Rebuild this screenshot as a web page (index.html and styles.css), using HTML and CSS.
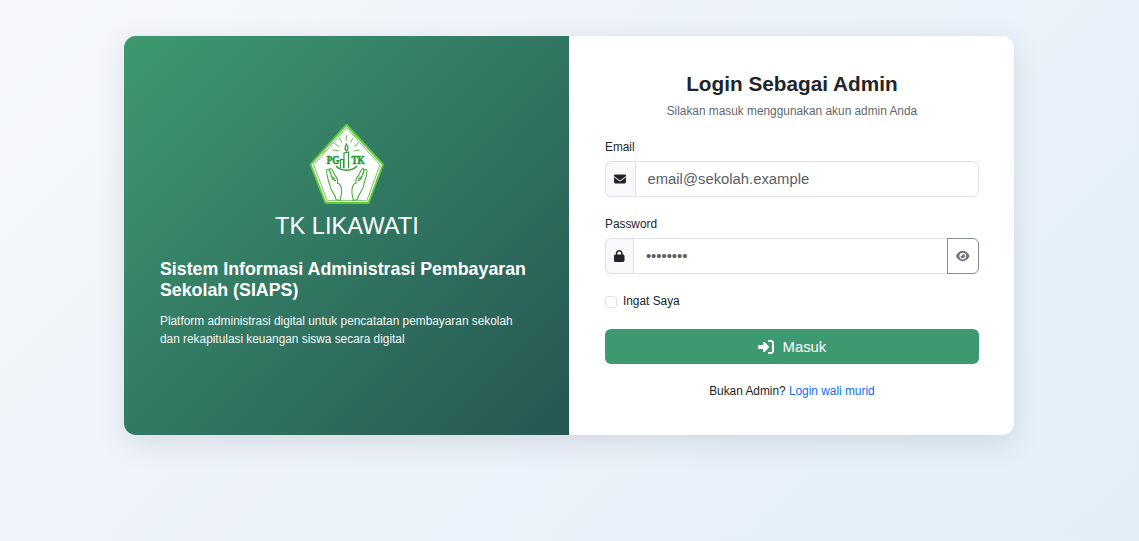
FILE: index.html
```html
<!DOCTYPE html>
<html lang="id">
<head>
<meta charset="utf-8">
<title>Login Admin</title>
<link rel="stylesheet" href="styles.css">
</head>
<body>
<main class="card">
  <section class="brand">
    <div class="brand-head">
      <svg class="logo" viewBox="0 0 76 82" role="img" aria-label="PG TK">
        <path d="M37.500 1.700 74 41.500 59.500 80H16.500L1.500 41.500Z" fill="#fff" stroke="#62c83c" stroke-width="2" stroke-linejoin="round"/>
        <path d="M37.500 4.700 71 41.900 57.800 77.700H18.200L4.700 41.900Z" fill="none" stroke="#62bd43" stroke-width=".9"/>
        <path d="M37.300 12v5M30.500 15l2.300 4.300M44 15l-2.300 4.300M25 20l4.500 3.500M49.500 20 45 23.500M24 27l5.500.8M50.500 27l-5.500.8" fill="none" stroke="#68b957" stroke-width="1" stroke-linecap="round"/>
        <g fill="#fff" stroke="#2f9a36" stroke-width="1.200">
          <path d="M31.500 45v-8.500H34.500V45M35 45.500V30l4.500-1v16.500"/>
          <path d="M37.300 28c-3-2.500-.5-4 0-7 2 3 2.800 4.500 0 7Z"/>
          <path d="M27 43c5 5.500 16 5.500 21 0" fill="none" stroke-width="1.500"/>
        </g>
        <text class="logo-text" x="17.800" y="40.700" textLength="12.600" lengthAdjust="spacingAndGlyphs">PG</text>
        <text class="logo-text" x="42.500" y="40.700" textLength="13" lengthAdjust="spacingAndGlyphs">TK</text>
        <g fill="none" stroke="#4dae42" stroke-width="1.100" stroke-linejoin="round" stroke-linecap="round">
          <path d="M27 76.500C26.500 70 21 68 20.500 61 19 56 16.500 49 18 46.500c1.500-1 2.500 1 3.500 4-1.500-4.500-.5-6.500 1.500-4l3 6c2 2 3 5 2.500 8 1.500-1 3.500 2 4 6 .8 4-.5 7-1.500 11Z"/>
          <path d="M48.500 76.500c.5-6.500 6-8.500 6.500-15.500 1.500-5 4-12 2.500-14.500-1.500-1-2.500 1-3.500 4 1.500-4.500.5-6.500-1.500-4l-3 6c-2 2-3 5-2.500 8-1.500-1-3.500 2-4 6-.8 4 .5 7 1.500 11Z"/>
          <path d="m21.500 50 2 6 3 2M22 53l4 3M54 50l-2 6-3 2M53.500 53l-4 3"/>
        </g>
      </svg>
      <div class="school">TK LIKAWATI</div>
    </div>
    <h1 class="system">Sistem Informasi Administrasi Pembayaran Sekolah (SIAPS)</h1>
    <p class="about">Platform administrasi digital untuk pencatatan pembayaran sekolah dan rekapitulasi keuangan siswa secara digital</p>
  </section>
  <form class="login">
    <h2 class="title">Login Sebagai Admin</h2>
    <p class="subtitle">Silakan masuk menggunakan akun admin Anda</p>
    <label class="label" for="email">Email</label>
    <div class="group">
      <span class="addon addon-mail"><svg width="12" height="12" viewBox="0 0 512 512" fill="currentColor"><path d="M48 64C21.500 64 0 85.500 0 112c0 15.100 7.100 29.300 19.200 38.400l217.600 163.200c11.400 8.500 27 8.500 38.400 0l217.600-163.200c12.100-9.100 19.200-23.300 19.200-38.400 0-26.500-21.500-48-48-48H48zM0 176v208c0 35.300 28.700 64 64 64h384c35.300 0 64-28.700 64-64V176L294.400 339.200c-22.800 17.100-54 17.100-76.800 0L0 176z"/></svg></span>
      <input class="input input-end" id="email" type="email" placeholder="email@sekolah.example">
    </div>
    <label class="label" for="password">Password</label>
    <div class="group">
      <span class="addon addon-lock"><svg width="10.500" height="12" viewBox="0 0 448 512" fill="currentColor"><path d="M144 144v48h160v-48c0-44.200-35.800-80-80-80s-80 35.800-80 80zm-64 48v-48C80 64.500 144.500 0 224 0s144 64.500 144 144v48h16c35.300 0 64 28.700 64 64v192c0 35.300-28.700 64-64 64H64c-35.300 0-64-28.700-64-64V256c0-35.300 28.700-64 64-64h16z"/></svg></span>
      <input class="input" id="password" type="text" placeholder="••••••••">
      <button class="reveal" type="button" aria-label="Lihat"><svg width="13.500" height="12" viewBox="0 0 576 512" fill="currentColor"><path d="M288 32c-80.800 0-145.500 36.800-192.600 80.600C48.600 156 17.300 208 2.500 243.700c-3.300 7.900-3.300 16.700 0 24.600C17.300 304 48.600 356 95.400 399.400 142.500 443.200 207.200 480 288 480s145.500-36.800 192.600-80.600c46.800-43.500 78.100-95.400 93-131.100 3.300-7.900 3.300-16.700 0-24.600-14.900-35.700-46.200-87.700-93-131.100C433.500 68.800 368.800 32 288 32zM144 256a144 144 0 1 1 288 0 144 144 0 1 1-288 0zm144-64c0 35.300-28.700 64-64 64-7.100 0-13.900-1.200-20.300-3.300-5.500-1.800-11.900 1.600-11.700 7.400.3 6.900 1.300 13.800 3.200 20.700 13.700 51.200 66.400 81.600 117.600 67.900s81.600-66.400 67.900-117.600c-11.100-41.500-47.800-69.400-88.600-71.100-5.800-.2-9.200 6.100-7.400 11.700 2.100 6.400 3.300 13.200 3.300 20.300z"/></svg></button>
    </div>
    <label class="remember"><input class="check" type="checkbox">Ingat Saya</label>
    <button class="submit" type="button"><svg width="16" height="16" viewBox="0 0 512 512" fill="currentColor"><path d="M217.900 105.900 340.700 228.700c7.200 7.200 11.300 17.100 11.300 27.300s-4.100 20.100-11.300 27.300L217.900 406.100c-6.400 6.400-15 9.900-24 9.900-18.700 0-33.900-15.200-33.900-33.900V320H32c-17.700 0-32-14.300-32-32v-64c0-17.700 14.300-32 32-32h128v-62.100c0-18.700 15.200-33.900 33.900-33.900 9 0 17.600 3.600 24 9.900zM352 416h64c17.700 0 32-14.300 32-32V128c0-17.700-14.300-32-32-32h-64c-17.700 0-32-14.300-32-32s14.300-32 32-32h64c53 0 96 43 96 96v256c0 53-43 96-96 96h-64c-17.700 0-32-14.300-32-32s14.300-32 32-32z"/></svg>Masuk</button>
    <p class="switch">Bukan Admin? <a class="link" href="#">Login wali murid</a></p>
  </form>
</main>
</body>
</html>
```
FILE: styles.css
```css
* { box-sizing: border-box; }
body {
  margin: 0;
  min-height: 541px;
  padding-top: 35.6px;
  background: linear-gradient(135deg, #f6f8fa 0%, #eef3fb 40%, #e2eff8 100%);
  color: #212529;
  font: 11.87px/17.8px "Liberation Sans", Arial, sans-serif;
}
h1, h2, p { margin: 0; }
.card {
  display: grid;
  grid-template-columns: 1fr 1fr;
  width: 890px;
  height: 399.6px;
  margin: 0 0 0 124.400px;
  overflow: hidden;
  border-radius: 11.9px;
  background: #fff;
  box-shadow: 0 7.4px 29.7px rgba(0, 0, 0, .1);
}
.brand {
  display: flex;
  flex-direction: column;
  justify-content: center;
  padding: 1.4px 35.6px 0;
  background: linear-gradient(135deg, #3d9970 0%, #265653 100%);
  color: #fff;
}
.brand-head {
  display: flex;
  flex-direction: column;
  align-items: center;
  margin-bottom: 13.6px;
}
.logo { display: block; width: 76px; height: 82px; margin-bottom: 4.2px; }
.logo-text { font: bold 11.500px "Liberation Serif", serif; fill: #239b34; stroke: #239b34; stroke-width: .6px; }
.school { font-size: 23.7px; line-height: 35.6px; }
.system { margin-bottom: 11.9px; font-size: 17.8px; line-height: 21.4px; }
.about { opacity: .95; }
.login { display: flex; flex-direction: column; padding: 36.5px 35.6px 0; }
.title { margin-bottom: 5.9px; font-size: 20.77px; line-height: 24.9px; text-align: center; }
.subtitle { margin-bottom: 18.2px; color: #63686c; text-align: center; }
.label { margin-bottom: 4.6px; }
.group { display: flex; height: 35.6px; margin-bottom: 19.100px; }
.addon {
  display: flex;
  align-items: center;
  justify-content: center;
  border: 1px solid #dee2e6;
  border-right: 0;
  border-radius: 6px 0 0 6px;
  background: #f8f9fa;
}
.addon-mail { width: 30px; }
.addon-lock { width: 28.4px; }
.input {
  flex: 1;
  min-width: 0;
  padding: 0 11.5px;
  border: 1px solid #dee2e6;
  background: #fff;
  font: 14.83px "Liberation Sans", Arial, sans-serif;
}
.input::placeholder { color: #5a5e62; opacity: 1; }
.input-end { border-radius: 0 6px 6px 0; }
.reveal {
  display: flex;
  align-items: center;
  justify-content: center;
  width: 32px;
  margin-left: -1px;
  padding: 0;
  border: 1px solid #858c93;
  border-radius: 0 6px 6px 0;
  background: #fff;
  color: #6c757d;
}
.remember { display: flex; align-items: center; gap: 6px; margin-bottom: 18.4px; }
.check {
  appearance: none;
  width: 12px;
  height: 12px;
  margin: 0;
  border: 1px solid #dee2e6;
  border-radius: 3px;
  background: #fff;
}
.submit {
  display: flex;
  align-items: center;
  justify-content: center;
  gap: 9px;
  flex: none;
  height: 35px;
  margin-bottom: 18.3px;
  padding: 0;
  border: 0;
  border-radius: 6px;
  background: #3d9970;
  color: #fff;
  font: 14.83px/18px "Liberation Sans", Arial, sans-serif;
}
.switch { text-align: center; }
.link { color: #0d6efd; text-decoration: none; }
```
